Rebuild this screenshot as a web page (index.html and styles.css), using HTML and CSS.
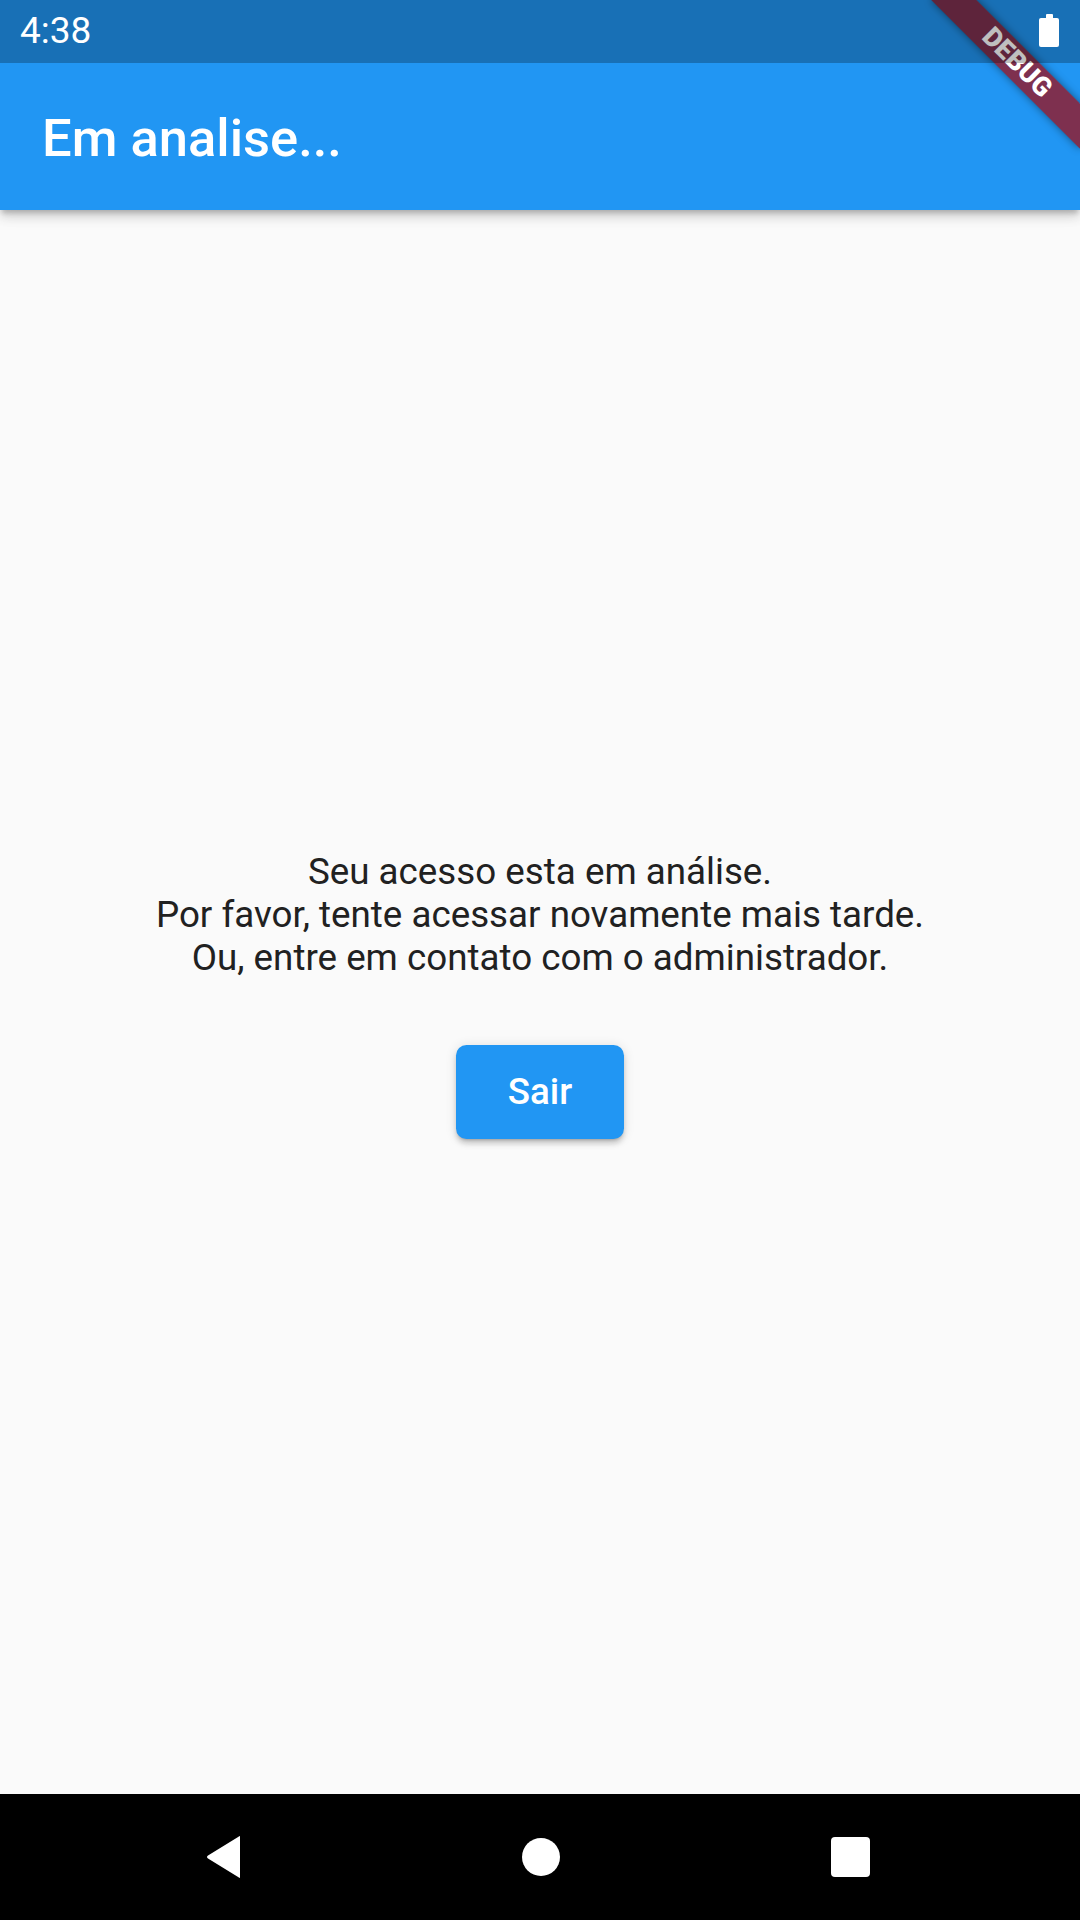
FILE: index.html
```html
<!DOCTYPE html>
<html lang="pt">
<head>
<meta charset="utf-8">
<title>Em analise...</title>
<link rel="stylesheet" href="styles.css">
</head>
<body>
<div class="screen">
  <header class="header">
    <div class="statusbar">
      <span class="time">4:38</span>
      <svg class="battery" width="20" height="33" viewBox="0 0 20 33" aria-hidden="true">
        <rect x="7" y="0" width="7" height="5" rx="1" fill="#fff"/>
        <rect x="0" y="4" width="20" height="29" rx="2" fill="#fff"/>
      </svg>
    </div>
    <div class="toolbar">
      <h1 class="title">Em analise...</h1>
    </div>
  </header>
  <main class="body">
    <p class="message">Seu acesso esta em análise.<br>Por favor, tente acessar novamente mais tarde.<br>Ou, entre em contato com o administrador.</p>
    <button class="btn" type="button">Sair</button>
  </main>
  <nav class="navbar">
    <svg class="nav-icon" width="36" height="44" viewBox="0 0 36 44" aria-hidden="true">
      <path d="M34 2 L34 42 Q34 44 32.5 42.3 L2 23.5 Q0 22 2 20.5 L32.5 1.7 Q34 0 34 2 Z" fill="#fff"/>
    </svg>
    <span class="nav-home"></span>
    <span class="nav-recent"></span>
  </nav>
  <div class="debug">DEBUG</div>
</div>
</body>
</html>
```
FILE: styles.css
```css
html, body {
  margin: 0;
  padding: 0;
}
body {
  background: #fafafa;
  font-family: Roboto, "Noto Sans", "Liberation Sans", sans-serif;
  overflow: hidden;
}
.screen {
  position: relative;
  width: 1080px;
  height: 1920px;
  display: flex;
  flex-direction: column;
  overflow: hidden;
  background: #fafafa;
}
.header {
  flex: none;
  background: #2196f3;
  box-shadow: 0 5px 5px -2px rgba(0,0,0,0.2), 0 8px 10px rgba(0,0,0,0.1), 0 2px 18px rgba(0,0,0,0.08);
}
.statusbar {
  position: relative;
  z-index: 6;
  height: 63px;
  background: rgba(0, 0, 0, 0.25);
  display: flex;
  align-items: center;
  justify-content: space-between;
  padding: 0 21px 0 20px;
  color: #fff;
}
.time {
  font-size: 37px;
  font-weight: 400;
  margin-top: -2px;
}
.battery {
  display: block;
  margin-top: -2px;
}
.toolbar {
  height: 147px;
  display: flex;
  align-items: center;
  padding: 4px 42px 0;
  box-sizing: border-box;
}
.title {
  margin: 0;
  color: #fff;
  font-size: 52.5px;
  font-weight: 500;
  line-height: 1.172;
}
.body {
  flex: 1;
  display: flex;
  flex-direction: column;
  align-items: center;
  justify-content: center;
}
.message {
  margin: 0;
  text-align: center;
  color: #212121;
  font-size: 36.75px;
  line-height: 43px;
  font-weight: 400;
}
.btn {
  margin: 66px 0 16px;
  width: 168px;
  height: 94px;
  border: none;
  border-radius: 10.5px;
  background: #2196f3;
  color: #fff;
  font-family: Roboto, "Noto Sans", "Liberation Sans", sans-serif;
  font-size: 36.75px;
  font-weight: 500;
  padding: 0;
  box-shadow: 0 3px 3px -2px rgba(0,0,0,0.2), 0 5px 5px rgba(0,0,0,0.14), 0 1px 12px rgba(0,0,0,0.12);
}
.navbar {
  flex: none;
  height: 126px;
  background: #000;
  display: flex;
  align-items: center;
  padding: 0 210px 0 206px;
  justify-content: space-between;
}
.nav-icon {
  display: block;
}
.nav-home {
  width: 38px;
  height: 38px;
  border-radius: 50%;
  background: #fff;
  margin-left: 8px;
}
.nav-recent {
  width: 39px;
  height: 40px;
  border-radius: 4px;
  background: #fff;
}
.debug {
  position: absolute;
  left: 912px;
  top: 47px;
  width: 210px;
  height: 31.5px;
  transform: rotate(45deg);
  background: rgba(150, 22, 38, 0.8);
  box-shadow: 0 0 8px rgba(0,0,0,0.45);
  color: #fff;
  font-size: 26.8px;
  font-weight: 900;
  line-height: 31.5px;
  text-align: center;
  z-index: 5;
}
```
